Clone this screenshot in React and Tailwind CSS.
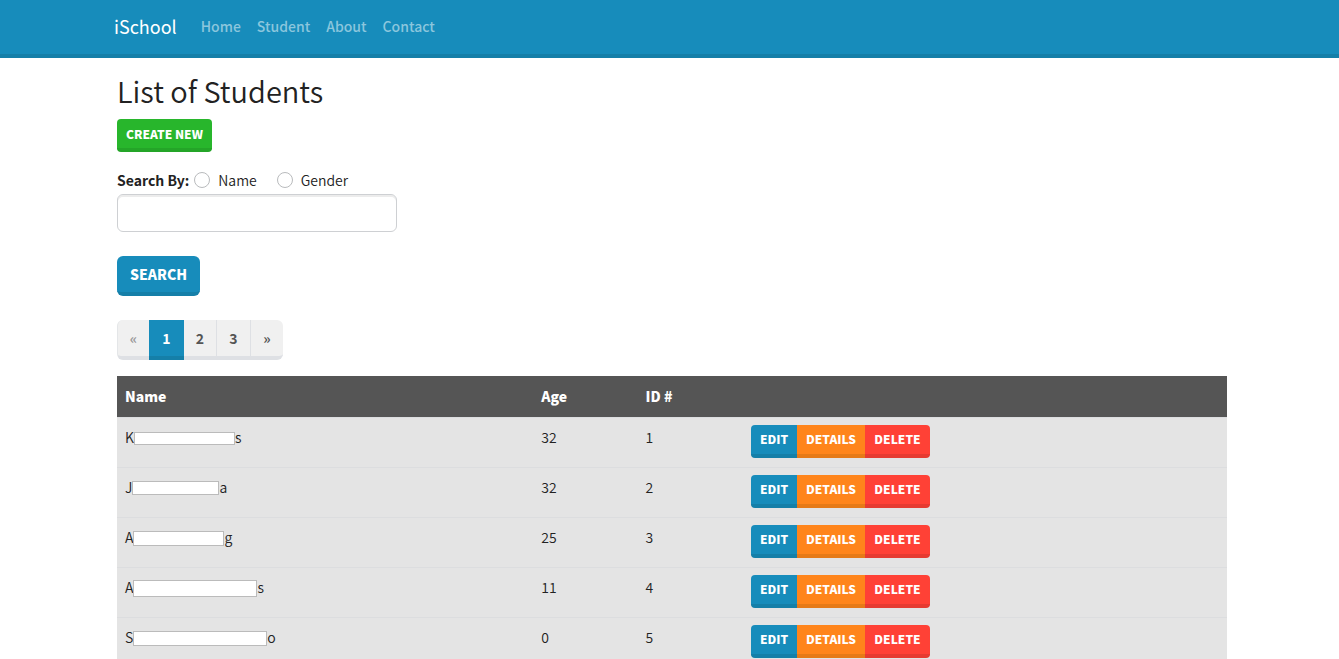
import React from 'react';

const navLinks = ['Home', 'Student', 'About', 'Contact'];

const students = [
  { first: 'K', last: 's', mask: 'w-[101px] h-[13px]', age: 32, id: 1 },
  { first: 'J', last: 'a', mask: 'w-[87px] h-[14px]', age: 32, id: 2 },
  { first: 'A', last: 'g', mask: 'w-[91px] h-[15px]', age: 25, id: 3 },
  { first: 'A', last: 's', mask: 'w-[124px] h-[17px]', age: 11, id: 4 },
  { first: 'S', last: 'o', mask: 'w-[134px] h-[15px]', age: 0, id: 5 },
];

function Navbar() {
  return (
    <header className="border-b-4 border-[#157fa8] bg-[#178cbb]">
      <nav className="mx-auto flex h-[54px] max-w-[1111px] items-center pb-0.5">
        <a href="#" className="mr-4 text-lg leading-7 font-normal text-white">iSchool</a>
        <ul className="flex text-sm font-medium">
          {navLinks.map((label) => (
            <li key={label}>
              <a href="#" className="px-2 text-[#8bc6dd]">{label}</a>
            </li>
          ))}
        </ul>
      </nav>
    </header>
  );
}

function SearchForm() {
  return (
    <form className="mt-4">
      <fieldset className="flex h-[26px] items-start">
        <legend className="float-left mr-[5px] text-sm leading-6 font-bold">Search By:</legend>
        <label className="mr-5 flex items-center gap-2">
          <input type="radio" name="field" className="size-4 appearance-none rounded-full border border-[#b9bbbd] bg-white" />
          Name
        </label>
        <label className="flex items-center gap-2">
          <input type="radio" name="field" className="size-4 appearance-none rounded-full border border-[#b9bbbd] bg-white" />
          Gender
        </label>
      </fieldset>
      <input
        type="text"
        aria-label="Search text"
        className="block h-[38px] w-[280px] rounded-md border border-[#ced0d3] bg-white px-3 shadow-[inset_0_2px_0_rgba(0,0,0,0.075)]"
      />
      <button
        type="button"
        className="mt-6 h-10 rounded-md border-b-4 border-[#157fa8] bg-[#178cbb] px-[13px] text-sm font-black text-white uppercase"
      >
        Search
      </button>
    </form>
  );
}

function Pagination() {
  const item = 'flex h-10 items-center justify-center border-b-4 text-sm font-bold';
  const idle = 'border-b-[#dee0e4] border-l border-l-[#dee0e4] bg-[#f0f0f0] text-[#555]';
  return (
    <nav aria-label="Pages" className="mt-6 flex">
      <a href="#" className={`${item} w-8 rounded-l-md border-b-[#dee0e4] border-l border-l-[#e4e6e8] bg-[#f0f0f0] text-[#999]`}>«</a>
      <a href="#" className={`${item} w-[35px] border-[#157fa8] bg-[#178cbb] text-white`}>1</a>
      <a href="#" className={`${item} w-8 border-b-[#dee0e4] bg-[#f0f0f0] text-[#555]`}>2</a>
      <a href="#" className={`${item} ${idle} w-[34px]`}>3</a>
      <a href="#" className={`${item} ${idle} w-[33px] rounded-r-md`}>»</a>
    </nav>
  );
}

function RowActions() {
  const base = 'h-[33px] border-b-4 text-xs font-black text-white uppercase';
  return (
    <div className="flex">
      <button type="button" className={`${base} w-[46px] rounded-l border-[#157fa8] bg-[#178cbb]`}>Edit</button>
      <button type="button" className={`${base} w-[68px] border-[#e67a17] bg-[#ff851b]`}>Details</button>
      <button type="button" className={`${base} w-[65px] rounded-r border-[#e63b31] bg-[#ff4136]`}>Delete</button>
    </div>
  );
}

function StudentTable() {
  return (
    <table className="mt-4 w-full table-fixed bg-[#e4e4e4] text-left">
      <thead className="bg-[#555] text-white">
        <tr className="h-[41px]">
          <th className="w-[37.5%] px-2 font-black">Name</th>
          <th className="w-[9.4%] px-2 font-black">Age</th>
          <th className="w-[9.5%] px-2 font-black">ID #</th>
          <th aria-label="Actions" className="px-2"></th>
        </tr>
      </thead>
      <tbody>
        {students.map((s) => (
          <tr key={s.id} className="h-[50px] border-t border-[#dcdddf] align-top">
            <td className="px-2 pt-[7px]">
              <div className="flex h-6 items-center">
                {s.first}
                <span className={`${s.mask} mt-[3px] border border-[#bbb] bg-white`}></span>
                {s.last}
              </div>
            </td>
            <td className="px-2 pt-[7px]">{s.age}</td>
            <td className="px-2 pt-[7px]">{s.id}</td>
            <td className="px-2 pt-[7px]"><RowActions /></td>
          </tr>
        ))}
      </tbody>
    </table>
  );
}

export default function App() {
  return (
    <div className="h-screen overflow-hidden bg-white font-['Noto_Sans_CJK_SC','Source_Sans_Pro',sans-serif] text-sm leading-6 font-[350] text-[#222]">
      <Navbar />
      <div className="pl-[5px]">
        <main className="mx-auto max-w-[1110px] pt-3.5">
          <h1 className="mb-2.5 text-[29px] leading-[37px] font-[350]">List of Students</h1>
          <button
            type="button"
            className="block h-[33px] rounded border-b-4 border-[#24a528] bg-[#28b62c] px-[9px] text-xs font-black text-white uppercase"
          >
            Create New
          </button>
          <SearchForm />
          <Pagination />
          <StudentTable />
        </main>
      </div>
    </div>
  );
}
